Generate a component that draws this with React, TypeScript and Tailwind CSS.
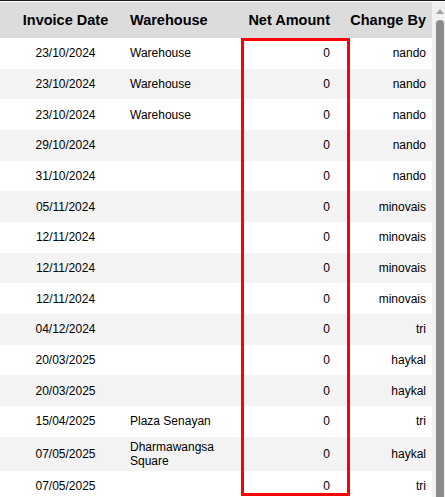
import React from "react";

type Row = { date: string; wh: string; net: string; by: string };

const rows: Row[] = [
  { date: "23/10/2024", wh: "Warehouse", net: "0", by: "nando" },
  { date: "23/10/2024", wh: "Warehouse", net: "0", by: "nando" },
  { date: "23/10/2024", wh: "Warehouse", net: "0", by: "nando" },
  { date: "29/10/2024", wh: "", net: "0", by: "nando" },
  { date: "31/10/2024", wh: "", net: "0", by: "nando" },
  { date: "05/11/2024", wh: "", net: "0", by: "minovais" },
  { date: "12/11/2024", wh: "", net: "0", by: "minovais" },
  { date: "12/11/2024", wh: "", net: "0", by: "minovais" },
  { date: "12/11/2024", wh: "", net: "0", by: "minovais" },
  { date: "04/12/2024", wh: "", net: "0", by: "tri" },
  { date: "20/03/2025", wh: "", net: "0", by: "haykal" },
  { date: "20/03/2025", wh: "", net: "0", by: "haykal" },
  { date: "15/04/2025", wh: "Plaza Senayan", net: "0", by: "tri" },
  { date: "07/05/2025", wh: "Dharmawangsa Square", net: "0", by: "haykal" },
  { date: "07/05/2025", wh: "", net: "0", by: "tri" },
];

const grid = "grid grid-cols-[126px_110px_98px_98px]";

export default function App() {
  return (
    <div
      className="relative w-[445px] h-[497px] overflow-hidden bg-white text-black"
      style={{ fontFamily: '"Liberation Sans", Arial, sans-serif' }}
    >
      <div className="h-px bg-[#1a1a1a]" />
      <div className="h-px bg-[#fdfdf0]" />
      <div className="flex">
        <div className="w-[432px] flex flex-col">
          <div className={`${grid} h-[36px] bg-[#dcdcdc] items-center text-[14.5px] font-bold leading-none`}>
            <div className="pl-[5px] text-center">Invoice Date</div>
            <div className="pl-[4px]">Warehouse</div>
            <div className="pr-[4px] text-right">Net Amount</div>
            <div className="pr-[6px] text-right">Change By</div>
          </div>
          {rows.map((r, i) => (
            <div
              key={i}
              className={`${grid} min-h-[30.67px] py-[3px] items-center text-[12px] leading-[14px] ${
                i % 2 === 0 ? "bg-white" : "bg-[#f3f3f3]"
              }`}
            >
              <div className="pl-[5px] text-center">{r.date}</div>
              <div className="pl-[4px] pr-[4px]">{r.wh}</div>
              <div className="pr-[4px] text-right">{r.net}</div>
              <div className="pr-[6px] text-right">{r.by}</div>
            </div>
          ))}
        </div>
        <div className="w-[13px] h-[495px] bg-[#f0f0f0] flex flex-col">
          <div className="h-[18px] flex items-start justify-center pt-[7px] pl-[2px]">
            <svg width="8" height="5" viewBox="0 0 8 5">
              <polygon points="0,5 4,0 8,5" fill="#a3a3a3" />
            </svg>
          </div>
          <div className="ml-[4px] w-[8px] flex-1 bg-[#8a8a8a] rounded-t-[4px]" />
        </div>
      </div>
      <div className="absolute left-[241px] top-[38px] w-[109px] h-[458px] border-[3px] border-[#ff0000]" />
    </div>
  );
}
